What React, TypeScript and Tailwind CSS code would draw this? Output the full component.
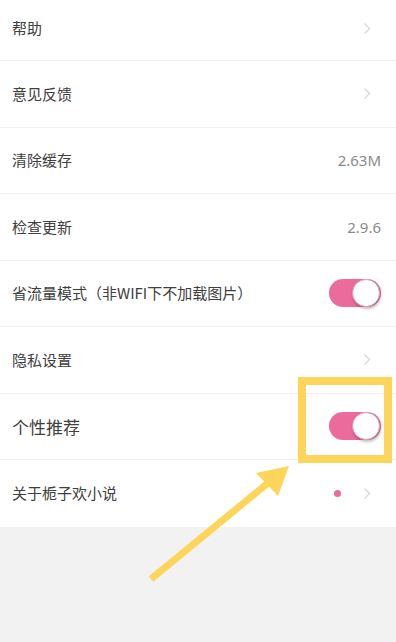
import React from 'react'

type Row = {
  label: string
  kind: 'arrow' | 'value' | 'toggle' | 'dot'
  value?: string
  big?: boolean
  first?: boolean
}

const ROWS: Row[] = [
  { label: '帮助', kind: 'arrow', first: true },
  { label: '意见反馈', kind: 'arrow' },
  { label: '清除缓存', kind: 'value', value: '2.63M' },
  { label: '检查更新', kind: 'value', value: '2.9.6' },
  { label: '省流量模式（非WIFI下不加载图片）', kind: 'toggle' },
  { label: '隐私设置', kind: 'arrow' },
  { label: '个性推荐', kind: 'toggle', big: true },
  { label: '关于栀子欢小说', kind: 'dot' },
]

function Chevron() {
  return (
    <svg width="8" height="13" viewBox="0 0 8 13" className="shrink-0">
      <path d="M1.5 1.5 L6.5 6.5 L1.5 11.5" fill="none" stroke="#d6d6d6" strokeWidth="1.2" />
    </svg>
  )
}

function Toggle() {
  return (
    <div className="relative h-[28px] w-[52px] rounded-full bg-[#ec6b9d]">
      <div className="absolute right-[1px] top-[0px] h-[28px] w-[28px] rounded-full border border-[#e0a0b8] bg-white shadow-[1px_2px_3px_rgba(0,0,0,0.25)]" />
    </div>
  )
}

export default function App() {
  return (
    <div
      className="relative h-[642px] w-[396px] overflow-hidden bg-[#f2f2f2]"
      style={{ fontFamily: '"Noto Sans CJK SC", "Noto Sans", sans-serif' }}
    >
      <div className="bg-white">
        {ROWS.map((r, i) => (
          <div
            key={r.label}
            className={`flex items-center justify-between pl-[12px] pr-[15px] ${r.first ? 'h-[61px] pb-[4px]' : 'h-[66.5px]'} ${i < ROWS.length - 1 ? 'border-b border-[#f0f0f0]' : ''}`}
          >
            <span className={`${r.big ? 'text-[17px]' : 'text-[15px]'} text-[#404040]`}>{r.label}</span>
            {r.kind === 'arrow' && (
              <div className="pr-[10px]">
                <Chevron />
              </div>
            )}
            {r.kind === 'value' && (
              <span className="text-[15px] text-[#8a8a8a]" style={{ fontFamily: '"Noto Sans", sans-serif' }}>
                {r.value}
              </span>
            )}
            {r.kind === 'toggle' && <Toggle />}
            {r.kind === 'dot' && (
              <div className="flex items-center gap-[22px] pr-[10px]">
                <div className="h-[7px] w-[7px] rounded-full bg-[#ec6b9d]" />
                <Chevron />
              </div>
            )}
          </div>
        ))}
      </div>

      {/* annotation: highlight box + arrow */}
      <div className="pointer-events-none absolute left-[298px] top-[377px] h-[86px] w-[94px] border-[8px] border-[#fdd55b]" />
      <svg className="pointer-events-none absolute left-0 top-0" width="396" height="642" viewBox="0 0 396 642">
        <line x1="151" y1="579" x2="268" y2="483" stroke="#fdd55b" strokeWidth="7" strokeLinecap="butt" />
        <polygon points="289,466 256,473 278,496" fill="#fdd55b" />
      </svg>
    </div>
  )
}
